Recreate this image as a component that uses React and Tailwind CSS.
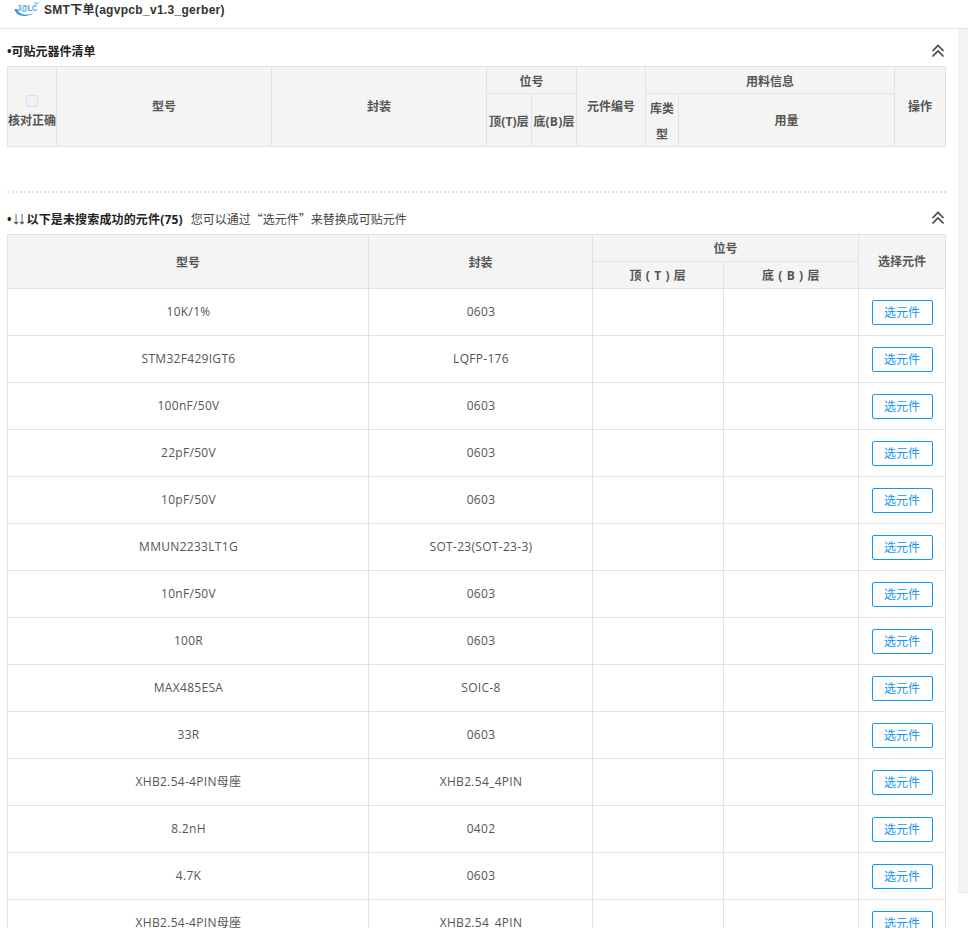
const rows = [
  ["10K/1%", "0603"],
  ["STM32F429IGT6", "LQFP-176"],
  ["100nF/50V", "0603"],
  ["22pF/50V", "0603"],
  ["10pF/50V", "0603"],
  ["MMUN2233LT1G", "SOT-23(SOT-23-3)"],
  ["10nF/50V", "0603"],
  ["100R", "0603"],
  ["MAX485ESA", "SOIC-8"],
  ["33R", "0603"],
  ["XHB2.54-4PIN母座", "XHB2.54_4PIN"],
  ["8.2nH", "0402"],
  ["4.7K", "0603"],
  ["XHB2.54-4PIN母座", "XHB2.54_4PIN"],
];

const FONT = 'font-["Open_Sans","Noto_Sans_CJK_SC",sans-serif]';
const th = "border border-[#e2e2e2] bg-[#f4f4f4] p-0 text-center align-middle text-xs font-bold text-[#555]";

function Chevrons() {
  return (
    <svg width="14" height="14" viewBox="0 0 14 14" fill="none" stroke="#444" strokeWidth="1.6">
      <path d="M1.5 7 7 1.5 12.5 7" />
      <path d="M1.5 12.5 7 7 12.5 12.5" />
    </svg>
  );
}

function Logo() {
  return (
    <svg width="26" height="17" viewBox="0 0 26 17" className="shrink-0">
      <path d="M0.5 8c1.500 8 13 9 20 3.500-7 3.500-15 3-18-3.500z" fill="#2f8fdc" />
      <path d="M19 0.500c2 1.500 4 1.500 6.500 0.500-0.500 3-4.500 4-6.500-0.500z" fill="#8ccbf2" />
      <text x="3" y="10" fontSize="9.500" fontWeight="700" fill="#3a9be3" fontFamily="Liberation Sans" textLength="20" lengthAdjust="spacingAndGlyphs">J@LC</text>
    </svg>
  );
}

export default function App() {
  return (
    <div className={`relative h-[928px] w-[968px] overflow-hidden bg-white ${FONT} text-xs text-[#555]`}>
      <header className="flex h-[29px] items-start gap-[4px] border-b border-[#e2e2e2] pl-[14px] pt-px">
        <Logo />
        <span className="text-xs leading-[19px] font-bold tracking-[0.3px] text-[#333] font-['Liberation_Sans','Noto_Sans_CJK_SC',sans-serif]">SMT下单(agvpcb_v1.3_gerber)</span>
      </header>

      <div className="flex">
        <main className="w-[958px] shrink-0 pl-[7px] pr-[12px]">
          <div className="flex h-[37px] items-end justify-between pb-[6px] pr-[1px]">
            <span className="translate-y-px text-xs leading-[18px] font-bold text-[#222]">•可贴元器件清单</span>
            <span className="flex -translate-y-[2px]"><Chevrons /></span>
          </div>
          <table className="w-[939px] table-fixed border-collapse">
            <colgroup>
              <col className="w-[49px]" />
              <col className="w-[215px]" />
              <col className="w-[215px]" />
              <col className="w-[45px]" />
              <col className="w-[45px]" />
              <col className="w-[69px]" />
              <col className="w-[33px]" />
              <col className="w-[216px]" />
              <col className="w-[51px]" />
            </colgroup>
            <thead>
              <tr className="h-[27px]">
                <th rowSpan={2} className={th}>
                  <span className="block translate-y-[5px]">
                    <span className="mx-auto mb-[4px] mt-[3px] block size-[12px] rounded-[2px] border border-[#dcdfe6] bg-[#eef1f9]" />
                    <span className="block leading-[20px]">核对正确</span>
                  </span>
                </th>
                <th rowSpan={2} className={th}>型号</th>
                <th rowSpan={2} className={th}>封装</th>
                <th colSpan={2} className={th}><span className="block translate-y-[2px]">位号</span></th>
                <th rowSpan={2} className={th}>元件编号</th>
                <th colSpan={2} className={th}><span className="block translate-y-[2px]">用料信息</span></th>
                <th rowSpan={2} className={th}>操作</th>
              </tr>
              <tr className="h-[53px]">
                <th className={`${th} whitespace-nowrap tracking-[0.2px]`}><span className="block translate-y-[2px]">顶(T)层</span></th>
                <th className={`${th} whitespace-nowrap tracking-[0.2px]`}><span className="block translate-y-[2px]">底(B)层</span></th>
                <th className={`${th} leading-[26px]`}><span className="block translate-y-[2px]">库类型</span></th>
                <th className={th}><span className="block translate-y-px">用量</span></th>
              </tr>
            </thead>
          </table>

          <div className="mt-[44px] border-t-2 border-dotted border-[#e2e2e2]" />

          <div className="flex h-[41px] items-end justify-between pb-[6px] pr-[1px]">
            <span className="translate-y-px leading-[18px]">
              <b className="text-[#222]">•<span className="text-[18px] leading-[14px] font-normal tracking-[-3px] text-[#444] font-['Liberation_Sans']">↓↓</span><span className="ml-[3px] tracking-[0.15px]">以下是未搜索成功的元件(75)</span></b>
              <span className="ml-[8px] text-[#444] font-['Noto_Sans_CJK_SC',sans-serif]">您可以通过“选元件”来替换成可贴元件</span>
            </span>
            <span className="flex -translate-y-[3px]"><Chevrons /></span>
          </div>

          <table className="w-[939px] table-fixed border-collapse">
            <colgroup>
              <col className="w-[361px]" />
              <col className="w-[224px]" />
              <col className="w-[131px]" />
              <col className="w-[135px]" />
              <col className="w-[87px]" />
            </colgroup>
            <thead>
              <tr className="h-[27px]">
                <th rowSpan={2} className={th}><span className="block translate-y-px">型号</span></th>
                <th rowSpan={2} className={th}><span className="block translate-y-px">封装</span></th>
                <th colSpan={2} className={th}><span className="block translate-y-px">位号</span></th>
                <th rowSpan={2} className={th}>选择元件</th>
              </tr>
              <tr className="h-[27px]">
                <th className={`${th} tracking-[0.6px]`}><span className="block translate-y-px">顶 ( T ) 层</span></th>
                <th className={`${th} tracking-[0.6px]`}><span className="block translate-y-px">底 ( B ) 层</span></th>
              </tr>
            </thead>
            <tbody>
              {rows.map(([model, pkg], i) => (
                <tr key={i} className="h-[47px]">
                  <td className="border border-[#e2e2e2] pl-px text-center tracking-[0.3px]">{model}</td>
                  <td className="border border-[#e2e2e2] pl-px text-center tracking-[0.3px]">{pkg}</td>
                  <td className="border border-[#e2e2e2]" />
                  <td className="border border-[#e2e2e2]" />
                  <td className="border border-[#e2e2e2] text-center">
                    <button className="h-[25px] w-[61px] rounded-[2px] border border-[#0f96f5] bg-white text-xs leading-[23px] text-[#0f96f5]">选元件</button>
                  </td>
                </tr>
              ))}
            </tbody>
          </table>
        </main>
        <aside className="h-[864px] w-[10px] shrink-0 border-b border-[#e6e6e6] bg-[#f4f4f4]" />
      </div>
    </div>
  );
}
